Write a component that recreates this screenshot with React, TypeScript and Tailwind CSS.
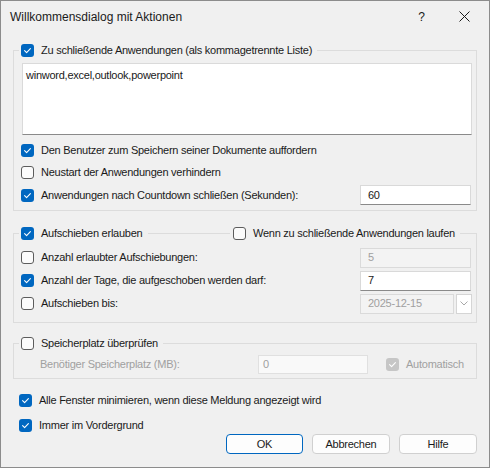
import React from "react";

const Box = ({ checked, disabled }: { checked?: boolean; disabled?: boolean }) => {
  if (checked) {
    return (
      <span
        className={`flex items-center justify-center w-[13px] h-[13px] rounded-[3px] shrink-0 ${
          disabled ? "bg-[#c6c6c6]" : "bg-[#0067c0]"
        }`}
      >
        <svg width="9" height="9" viewBox="0 0 9 9" fill="none">
          <path d="M1.6 4.7 L3.6 6.6 L7.4 2.6" stroke="white" strokeWidth="1.1" strokeLinecap="round" strokeLinejoin="round" />
        </svg>
      </span>
    );
  }
  return <span className="w-[13px] h-[13px] rounded-[3px] border border-[#5c5c5c] bg-[#fbfbfb] shrink-0" />;
};

const Check = ({
  label,
  checked,
  disabled,
}: {
  label: string;
  checked?: boolean;
  disabled?: boolean;
}) => (
  <span className="flex items-center gap-[7px] whitespace-nowrap">
    <Box checked={checked} disabled={disabled} />
    <span className={disabled ? "text-[#a0a0a0]" : "text-[#1a1a1a]"}>{label}</span>
  </span>
);

const Field = ({
  value,
  disabled,
  className,
}: {
  value: string;
  disabled?: boolean;
  className: string;
}) => (
  <div
    className={`h-[20px] flex items-center pl-[7px] border ${
      disabled
        ? "bg-[#f3f3f3] border-[#dadada] text-[#a0a0a0]"
        : "bg-white border-[#d9d9d9] border-b-[#8a8a8a] text-[#1a1a1a]"
    } ${className}`}
  >
    {value}
  </div>
);

const Button = ({ label, primary }: { label: string; primary?: boolean }) => (
  <button
    className={`h-[20px] rounded-[4px] bg-[#fdfdfd] text-[#1a1a1a] border ${
      primary ? "border-[#0067c0] w-[77px]" : "border-[#d0d0d0] w-[78px]"
    }`}
  >
    {label}
  </button>
);

export default function App() {
  return (
    <div className="w-[490px] h-[468px] bg-[#f0f0f0] border border-[#8c8c8c] flex flex-col font-['Liberation_Sans',Arial,sans-serif] text-[11px] leading-none select-none">
      {/* title bar */}
      <div className="h-[31px] flex items-center pl-[9px] pr-[19px] text-[12px] text-[#1a1a1a]">
        <span>Willkommensdialog mit Aktionen</span>
        <span className="ml-auto mr-[34px] text-[12px]">?</span>
        <svg width="11" height="11" viewBox="0 0 11 11">
          <path d="M0.5 0.5 L10.5 10.5 M10.5 0.5 L0.5 10.5" stroke="#1a1a1a" strokeWidth="1" />
        </svg>
      </div>

      <div className="flex flex-col px-[12px] tracking-[-0.25px]">
        {/* applications to close */}
        <fieldset className="mt-[10px] border border-[#dcdcdc] pb-[4px]">
          <legend className="ml-[5px] px-[2px] h-[16px] flex items-center pr-[5px]">
            <Check label="Zu schließende Anwendungen (als kommagetrennte Liste)" checked />
          </legend>
          <div className="mt-[5px] ml-[8px] mr-[4px] h-[72px] bg-white border border-[#dadada] border-b-[#8a8a8a] px-[3px] pt-[6px] text-[#1a1a1a]">
            winword,excel,outlook,powerpoint
          </div>
          <div className="mt-[4px] h-[22px] flex items-center pl-[7px]">
            <Check label="Den Benutzer zum Speichern seiner Dokumente auffordern" checked />
          </div>
          <div className="h-[22px] flex items-center pl-[7px]">
            <Check label="Neustart der Anwendungen verhindern" />
          </div>
          <div className="mt-[1px] h-[22px] flex items-center pl-[7px] pr-[5px]">
            <Check label="Anwendungen nach Countdown schließen (Sekunden):" checked />
            <Field value="60" className="ml-auto w-[111px]" />
          </div>
        </fieldset>

        {/* deferral */}
        <fieldset className="mt-[14px] border border-[#dcdcdc] pb-[7px]">
          <legend className="ml-[5px] h-[16px] flex items-center">
            <div className="w-[211px] flex items-center">
              <span className="pl-[2px] pr-[6px]">
                <Check label="Aufschieben erlauben" checked />
              </span>
              <span className="flex-1 h-px bg-[#dcdcdc]" />
            </div>
            <span className="pl-[3px] pr-[5px]">
              <Check label="Wenn zu schließende Anwendungen laufen" />
            </span>
          </legend>
          <div className="mt-[5px] h-[23px] flex items-center pl-[7px] pr-[5px]">
            <Check label="Anzahl erlaubter Aufschiebungen:" />
            <Field value="5" disabled className="ml-auto w-[111px]" />
          </div>
          <div className="h-[23px] flex items-center pl-[7px] pr-[5px]">
            <Check label="Anzahl der Tage, die aufgeschoben werden darf:" checked />
            <Field value="7" className="ml-auto w-[111px]" />
          </div>
          <div className="h-[23px] flex items-center pl-[7px] pr-[4px]">
            <Check label="Aufschieben bis:" />
            <Field value="2025-12-15" disabled className="ml-auto w-[94px]" />
            <div className="ml-[2px] w-[16px] h-[20px] bg-white border border-[#d5d5d5] flex items-center justify-center">
              <svg width="8" height="5" viewBox="0 0 8 5">
                <path d="M0.5 0.5 L4 4 L7.5 0.5" stroke="#a8a8a8" strokeWidth="1" fill="none" />
              </svg>
            </div>
          </div>
        </fieldset>

        {/* disk space */}
        <fieldset className="mt-[12px] border border-[#dcdcdc] pb-[3px]">
          <legend className="ml-[5px] px-[2px] pr-[5px] h-[16px] flex items-center">
            <Check label="Speicherplatz überprüfen" />
          </legend>
          <div className="mt-[2px] h-[22px] flex items-center pl-[26px]">
            <span className="w-[218px] text-[#a0a0a0]">Benötiger Speicherplatz (MB):</span>
            <div className="w-[110px] h-[19px] flex items-center pl-[4px] bg-[#f9f9f9] border border-[#e0e0e0] text-[#a0a0a0]">
              0
            </div>
            <span className="ml-[18px]">
              <Check label="Automatisch" checked disabled />
            </span>
          </div>
        </fieldset>

        <div className="mt-[13px] h-[16px] flex items-center pl-[6px]">
          <Check label="Alle Fenster minimieren, wenn diese Meldung angezeigt wird" checked />
        </div>
        <div className="mt-[9px] h-[16px] flex items-center pl-[6px]">
          <Check label="Immer im Vordergrund" checked />
        </div>

        <div className="mt-[1px] flex justify-end gap-[9px]">
          <Button label="OK" primary />
          <Button label="Abbrechen" />
          <Button label="Hilfe" />
        </div>
      </div>
    </div>
  );
}
